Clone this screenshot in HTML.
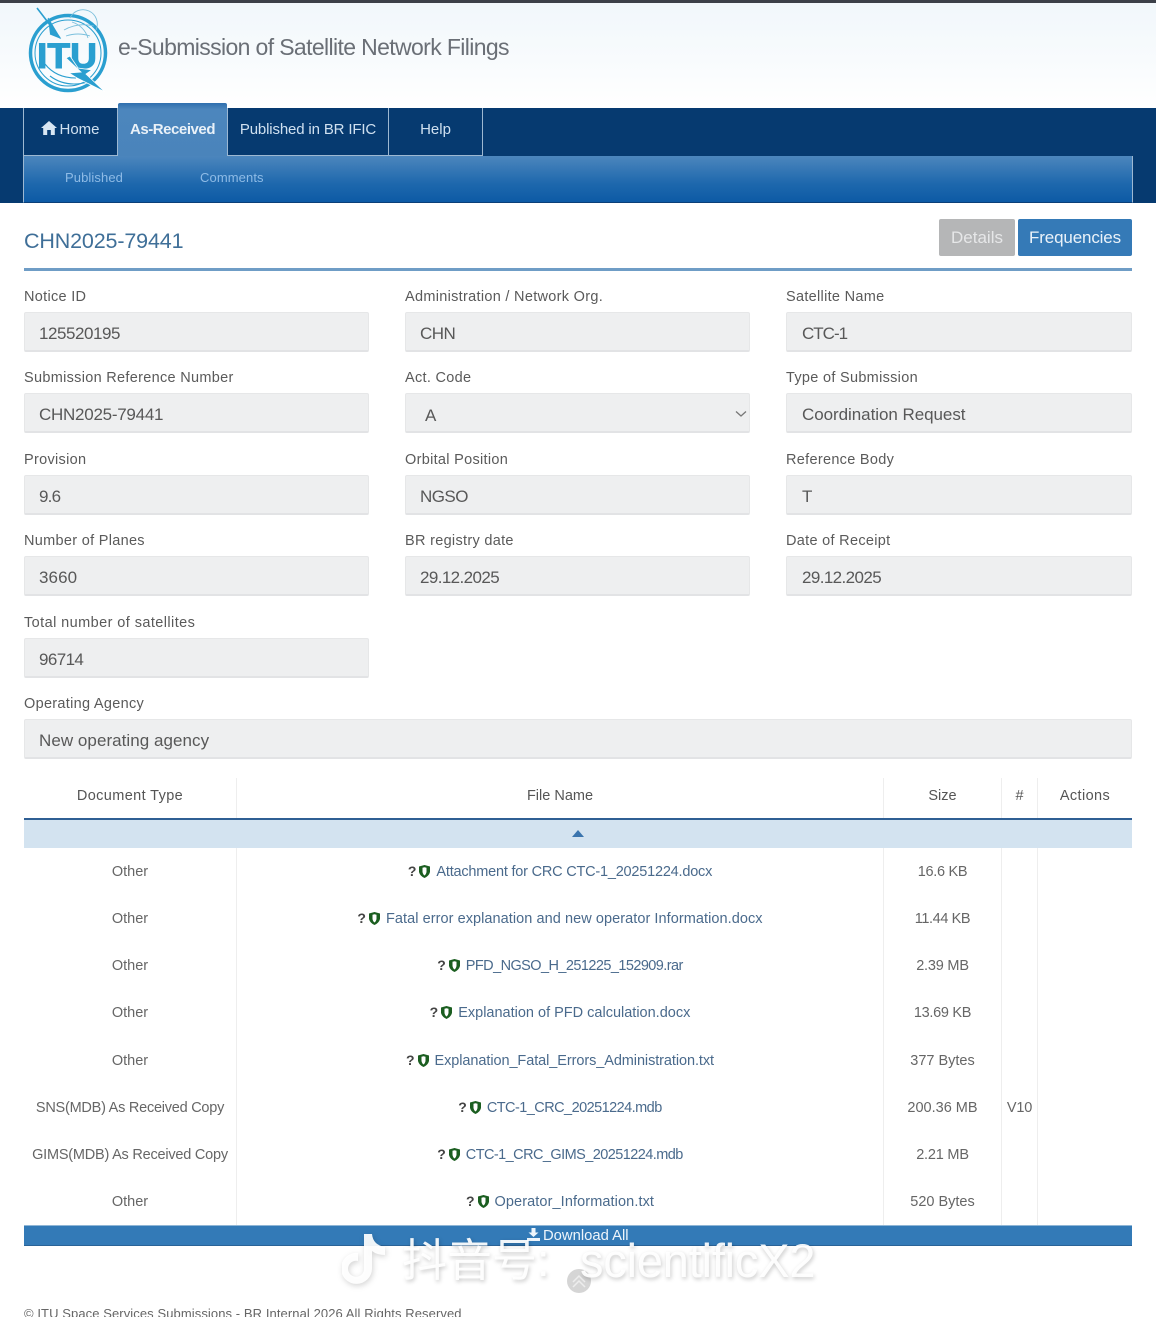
<!DOCTYPE html>
<html lang="en">
<head>
<meta charset="utf-8">
<title>e-Submission of Satellite Network Filings</title>
<style>
html,body{margin:0;padding:0;background:#fff;width:1156px;height:1317px;overflow:hidden}
body{font-family:"Liberation Sans","Noto Sans CJK SC",sans-serif;color:#555}
div{position:absolute;box-sizing:border-box;white-space:nowrap}
#page{left:0;top:0;width:1156px;height:1317px;overflow:hidden;background:#fff}
.l{font-size:14.5px;line-height:20px;color:#5a5a5a;letter-spacing:.3px;margin-top:1px}
.f{height:40px;background:#eeeff0;border:1px solid #e6e7e8;border-bottom:2px solid #e2e3e5;border-radius:2px;font-size:17px;line-height:41px;padding-left:14px;color:#585858}
.r{padding-left:15px}
.c1,.c2,.c3,.c4{text-align:center;font-size:14.5px;line-height:20px;color:#666;margin-top:2px}
.c2{margin-top:1px}
.c1{left:24px;width:212px}
.c2{left:237px;width:646px;color:#4a6a8c}
.c3{left:884px;width:117px}
.c4{left:1002px;width:35px}
.c2 b{color:#444;font-size:14px;font-weight:700;margin-right:3px;letter-spacing:0}
.c2 svg{vertical-align:-2px;margin-right:6px}
.v{width:1px;background:#eeeeee}
.tab{top:108px;height:48px;background:#063a70;color:#cfe0f0;font-size:15px;line-height:44px;text-align:center;border-right:1px solid #9db8d2;border-bottom:1px solid #9db8d2}
.sub{top:169px;font-size:13px;line-height:18px;color:#8ebbe6;letter-spacing:.1px}
</style>
</head>
<body>
<div id="page">
<!-- header -->
<div style="left:0;top:0;width:1156px;height:108px;background:linear-gradient(180deg,#f1f7fb 0%,#f8fbfd 55%,#ffffff 100%)"></div>
<div style="left:0;top:0;width:1156px;height:3px;background:#3c4048"></div>
<svg style="position:absolute;left:20px;top:4px" width="95" height="95" viewBox="0 0 95 95">
  <circle cx="48" cy="49" r="37.500" fill="none" stroke="#2a9fd0" stroke-width="3.500"/>
  <circle cx="48" cy="49" r="33" fill="none" stroke="#2a9fd0" stroke-width="1"/>
  <path d="M17 4 L40 34" fill="none" stroke="#2a9fd0" stroke-width="1.600"/>
  <path d="M28 14 L40 34 L30 30" fill="#2a9fd0" stroke="#2a9fd0" stroke-width="1"/>
  <path d="M50 14 A13 13 0 0 1 76 26 M52 18 Q64 22 68 34 M44 26 Q58 18 74 22 M46 32 Q58 28 70 32" fill="none" stroke="#7abfdc" stroke-width=".9"/>
  <path d="M25 60 Q36 74 56 74 M30 72 Q46 84 68 78" fill="none" stroke="#2a9fd0" stroke-width="1.100"/>
  <text x="17" y="64" font-family="Liberation Sans" font-weight="700" font-size="35" fill="#2a9fd0" stroke="#2a9fd0" stroke-width="1" textLength="60" lengthAdjust="spacingAndGlyphs">ITU</text>
  <path d="M46 54 L61 68 L49 69 L57 74 L85 88 L66 70 L72 66 L58 64 L50 52 Z" fill="#2a9fd0" stroke="#fff" stroke-width=".8"/>
</svg>
<div style="left:118px;top:32px;font-size:23px;line-height:30px;color:#6a6f76;letter-spacing:-.63px">e-Submission of Satellite Network Filings</div>

<!-- nav -->
<div style="left:0;top:108px;width:1156px;height:95px;background:#063a70"></div>
<div style="left:23px;top:156px;width:1110px;height:47px;background:linear-gradient(180deg,#4c86bd 0%,#1e68ad 60%,#0d5aa5 100%);border-left:1px solid #9db8d2;border-right:1px solid #9db8d2;border-bottom:1px solid #0b3f78"></div>
<div style="left:23px;top:108px;width:1px;height:48px;background:#9db8d2"></div>
<div class="tab" style="left:24px;width:94px"><svg width="16" height="14" viewBox="0 0 16 14" style="vertical-align:-1px;margin-right:2px"><path d="M8 0 L16 7 L13.800 7 L13.800 14 L9.800 14 L9.800 9 L6.200 9 L6.200 14 L2.200 14 L2.200 7 L0 7 Z" fill="#d8e6f3"/></svg>Home</div>
<div style="left:118px;top:103px;width:109px;height:53px;background:linear-gradient(180deg,#2f6fae 0%,#4c86bd 12%,#4a84bb 100%);border-radius:2px 2px 0 0;color:#e9f1f8;font-size:15px;font-weight:700;line-height:54px;text-align:center;letter-spacing:-.45px">As-Received</div>
<div class="tab" style="left:227px;width:162px;border-left:1px solid #9db8d2;letter-spacing:-.15px">Published in BR IFIC</div>
<div class="tab" style="left:389px;width:94px">Help</div>
<div class="sub" style="left:65px">Published</div>
<div class="sub" style="left:200px">Comments</div>

<!-- title -->
<div style="left:24px;top:226px;font-size:21.5px;line-height:30px;color:#3f6f98;letter-spacing:-.15px">CHN2025-79441</div>
<div style="left:939px;top:219px;width:76px;height:37px;background:#b5b6b7;border-radius:2px;color:#e6e7e8;font-size:17px;line-height:38px;text-align:center">Details</div>
<div style="left:1018px;top:219px;width:114px;height:37px;background:#357ab7;border-radius:2px;color:#eaf2f9;font-size:17px;line-height:38px;text-align:center;letter-spacing:-.15px">Frequencies</div>
<div style="left:24px;top:268px;width:1108px;height:3px;background:#6f9dc6"></div>

<!-- form -->
<div class="l" style="left:24px;top:286px">Notice ID</div>
<div class="l" style="left:405px;top:286px">Administration / Network Org.</div>
<div class="l" style="left:786px;top:286px">Satellite Name</div>
<div class="f" style="left:24px;top:312px;width:345px;letter-spacing:-.45px">125520195</div>
<div class="f" style="left:405px;top:312px;width:345px;letter-spacing:-.5px">CHN</div>
<div class="f r" style="left:786px;top:312px;width:346px;letter-spacing:-1px">CTC-1</div>

<div class="l" style="left:24px;top:367px">Submission Reference Number</div>
<div class="l" style="left:405px;top:367px">Act. Code</div>
<div class="l" style="left:786px;top:367px">Type of Submission</div>
<div class="f" style="left:24px;top:393px;width:345px;letter-spacing:-.26px">CHN2025-79441</div>
<div class="f" style="left:405px;top:393px;width:345px;padding-left:19px;line-height:43px">A<svg style="position:absolute;left:329px;top:16px" width="12" height="8" viewBox="0 0 12 8"><path d="M1 1.500 L6 6 L11 1.500" fill="none" stroke="#777" stroke-width="1.300"/></svg></div>
<div class="f r" style="left:786px;top:393px;width:346px;letter-spacing:-.05px">Coordination Request</div>

<div class="l" style="left:24px;top:449px">Provision</div>
<div class="l" style="left:405px;top:449px">Orbital Position</div>
<div class="l" style="left:786px;top:449px">Reference Body</div>
<div class="f" style="left:24px;top:475px;width:345px;letter-spacing:-.8px">9.6</div>
<div class="f" style="left:405px;top:475px;width:345px;letter-spacing:-.55px">NGSO</div>
<div class="f r" style="left:786px;top:475px;width:346px">T</div>

<div class="l" style="left:24px;top:530px">Number of Planes</div>
<div class="l" style="left:405px;top:530px">BR registry date</div>
<div class="l" style="left:786px;top:530px">Date of Receipt</div>
<div class="f" style="left:24px;top:556px;width:345px;letter-spacing:.1px">3660</div>
<div class="f" style="left:405px;top:556px;width:345px;letter-spacing:-.6px">29.12.2025</div>
<div class="f r" style="left:786px;top:556px;width:346px;letter-spacing:-.6px">29.12.2025</div>

<div class="l" style="left:24px;top:612px;letter-spacing:.42px">Total number of satellites</div>
<div class="f" style="left:24px;top:638px;width:345px;letter-spacing:-.6px">96714</div>

<div class="l" style="left:24px;top:693px">Operating Agency</div>
<div class="f" style="left:24px;top:719px;width:1108px;letter-spacing:.05px">New operating agency</div>

<!-- table -->
<div class="v" style="left:236px;top:778px;height:40px"></div>
<div class="v" style="left:883px;top:778px;height:40px"></div>
<div class="v" style="left:1001px;top:778px;height:40px"></div>
<div class="v" style="left:1037px;top:778px;height:40px"></div>
<div class="c1" style="top:784px;color:#555;letter-spacing:.38px">Document Type</div>
<div class="c2" style="top:785px;color:#555">File Name</div>
<div class="c3" style="top:784px;color:#555">Size</div>
<div class="c4" style="top:784px;color:#555">#</div>
<div style="left:1038px;width:94px;top:786px;text-align:center;font-size:14.5px;line-height:20px;color:#555;letter-spacing:.4px">Actions</div>
<div style="left:24px;top:818px;width:1108px;height:2px;background:#2f5f94"></div>
<div style="left:24px;top:820px;width:1108px;height:28px;background:#d3e3f0"></div>
<svg style="position:absolute;left:572px;top:830px" width="12" height="7" viewBox="0 0 12 7"><path d="M6 0 L12 7 L0 7 Z" fill="#3a74ad"/></svg>
<div class="v" style="left:236px;top:848px;height:377px"></div>
<div class="v" style="left:883px;top:848px;height:377px"></div>
<div class="v" style="left:1001px;top:848px;height:377px"></div>
<div class="v" style="left:1037px;top:848px;height:377px"></div>

<div class="c1" style="top:860px">Other</div>
<div class="c2" style="top:860px;letter-spacing:-.21px"><b>?</b><svg width="11" height="13" viewBox="0 0 11 13"><path d="M0 1.500 L5.500 0 L11 1.500 L11 7 Q10 11 5.500 13 Q1 11 0 7 Z M3.500 2.800 L3.500 7 Q4 9.500 5.500 10.500 Q7 9.500 7.500 7 L7.500 2.800 L5.500 2.300 Z" fill-rule="evenodd" fill="#1b5e20"/></svg>Attachment for CRC CTC-1_20251224.docx</div>
<div class="c3" style="top:860px;letter-spacing:-.3px">16.6 KB</div>

<div class="c1" style="top:907px">Other</div>
<div class="c2" style="top:907px;letter-spacing:.06px"><b>?</b><svg width="11" height="13" viewBox="0 0 11 13"><path d="M0 1.500 L5.500 0 L11 1.500 L11 7 Q10 11 5.500 13 Q1 11 0 7 Z M3.500 2.800 L3.500 7 Q4 9.500 5.500 10.500 Q7 9.500 7.500 7 L7.500 2.800 L5.500 2.300 Z" fill-rule="evenodd" fill="#1b5e20"/></svg>Fatal error explanation and new operator Information.docx</div>
<div class="c3" style="top:907px;letter-spacing:-.4px">11.44 KB</div>

<div class="c1" style="top:954px">Other</div>
<div class="c2" style="top:954px;letter-spacing:-.57px"><b>?</b><svg width="11" height="13" viewBox="0 0 11 13"><path d="M0 1.500 L5.500 0 L11 1.500 L11 7 Q10 11 5.500 13 Q1 11 0 7 Z M3.500 2.800 L3.500 7 Q4 9.500 5.500 10.500 Q7 9.500 7.500 7 L7.500 2.800 L5.500 2.300 Z" fill-rule="evenodd" fill="#1b5e20"/></svg>PFD_NGSO_H_251225_152909.rar</div>
<div class="c3" style="top:954px;letter-spacing:-.2px">2.39 MB</div>

<div class="c1" style="top:1001px">Other</div>
<div class="c2" style="top:1001px;letter-spacing:0"><b>?</b><svg width="11" height="13" viewBox="0 0 11 13"><path d="M0 1.500 L5.500 0 L11 1.500 L11 7 Q10 11 5.500 13 Q1 11 0 7 Z M3.500 2.800 L3.500 7 Q4 9.500 5.500 10.500 Q7 9.500 7.500 7 L7.500 2.800 L5.500 2.300 Z" fill-rule="evenodd" fill="#1b5e20"/></svg>Explanation of PFD calculation.docx</div>
<div class="c3" style="top:1001px;letter-spacing:-.3px">13.69 KB</div>

<div class="c1" style="top:1049px">Other</div>
<div class="c2" style="top:1049px;letter-spacing:-.08px"><b>?</b><svg width="11" height="13" viewBox="0 0 11 13"><path d="M0 1.500 L5.500 0 L11 1.500 L11 7 Q10 11 5.500 13 Q1 11 0 7 Z M3.500 2.800 L3.500 7 Q4 9.500 5.500 10.500 Q7 9.500 7.500 7 L7.500 2.800 L5.500 2.300 Z" fill-rule="evenodd" fill="#1b5e20"/></svg>Explanation_Fatal_Errors_Administration.txt</div>
<div class="c3" style="top:1049px">377 Bytes</div>

<div class="c1" style="top:1096px;letter-spacing:-.24px">SNS(MDB) As Received Copy</div>
<div class="c2" style="top:1096px;letter-spacing:-.55px"><b>?</b><svg width="11" height="13" viewBox="0 0 11 13"><path d="M0 1.500 L5.500 0 L11 1.500 L11 7 Q10 11 5.500 13 Q1 11 0 7 Z M3.500 2.800 L3.500 7 Q4 9.500 5.500 10.500 Q7 9.500 7.500 7 L7.500 2.800 L5.500 2.300 Z" fill-rule="evenodd" fill="#1b5e20"/></svg>CTC-1_CRC_20251224.mdb</div>
<div class="c3" style="top:1096px">200.36 MB</div>
<div class="c4" style="top:1096px;letter-spacing:-.2px">V10</div>

<div class="c1" style="top:1143px;letter-spacing:-.22px">GIMS(MDB) As Received Copy</div>
<div class="c2" style="top:1143px;letter-spacing:-.56px"><b>?</b><svg width="11" height="13" viewBox="0 0 11 13"><path d="M0 1.500 L5.500 0 L11 1.500 L11 7 Q10 11 5.500 13 Q1 11 0 7 Z M3.500 2.800 L3.500 7 Q4 9.500 5.500 10.500 Q7 9.500 7.500 7 L7.500 2.800 L5.500 2.300 Z" fill-rule="evenodd" fill="#1b5e20"/></svg>CTC-1_CRC_GIMS_20251224.mdb</div>
<div class="c3" style="top:1143px;letter-spacing:-.2px">2.21 MB</div>

<div class="c1" style="top:1190px">Other</div>
<div class="c2" style="top:1190px;letter-spacing:.1px"><b>?</b><svg width="11" height="13" viewBox="0 0 11 13"><path d="M0 1.500 L5.500 0 L11 1.500 L11 7 Q10 11 5.500 13 Q1 11 0 7 Z M3.500 2.800 L3.500 7 Q4 9.500 5.500 10.500 Q7 9.500 7.500 7 L7.500 2.800 L5.500 2.300 Z" fill-rule="evenodd" fill="#1b5e20"/></svg>Operator_Information.txt</div>
<div class="c3" style="top:1190px">520 Bytes</div>

<!-- download -->
<div style="left:24px;top:1225px;width:1108px;height:21px;background:#337ab7;border-top:1px solid #8fb6d6;border-bottom:1px solid #2a6397"></div>
<div style="left:527px;top:1227px;font-size:14.8px;line-height:19px;color:#eef5fb"><svg width="13" height="13" viewBox="0 0 13 13" style="vertical-align:-1px;margin-right:3px"><path d="M4.500 0 H8.500 V4.500 H11.500 L6.500 9 L1.500 4.500 H4.500 Z M0 10 H13 V13 H0 Z" fill="#eef5fb"/></svg>Download All</div>

<!-- scroll-up -->
<svg style="position:absolute;left:567px;top:1269px" width="24" height="24" viewBox="0 0 24 24"><circle cx="12" cy="12" r="12" fill="#d5d5d5"/><path d="M6 13 L12 7 L18 13 M6 18 L12 12 L18 18" fill="none" stroke="#ededed" stroke-width="1.500"/></svg>

<!-- watermark -->
<svg style="position:absolute;left:342px;top:1232px;filter:drop-shadow(1px 2px 3px rgba(0,0,0,.18))" width="50" height="54" viewBox="0 0 50 54"><path d="M22 2 H30 Q31 13 43 15 V23 Q35 23 30 19 V36 A15.500 15.500 0 1 1 16 21 V29 A8 8 0 1 0 22 36 Z" fill="#ffffff" fill-opacity=".92"/></svg>
<div style="left:402px;top:1232px;font-size:45px;line-height:58px;color:rgba(255,255,255,.93);text-shadow:1px 2px 4px rgba(0,0,0,.22)">抖音号:</div>
<div style="left:580px;top:1232px;font-size:47px;line-height:58px;color:rgba(255,255,255,.93);text-shadow:1px 2px 4px rgba(0,0,0,.22);letter-spacing:-.2px">scientificX2</div>

<!-- footer -->
<div style="left:24px;top:1305px;font-size:13px;line-height:18px;color:#666;letter-spacing:.085px">© ITU Space Services Submissions - BR Internal 2026 All Rights Reserved</div>
</div>
</body>
</html>
